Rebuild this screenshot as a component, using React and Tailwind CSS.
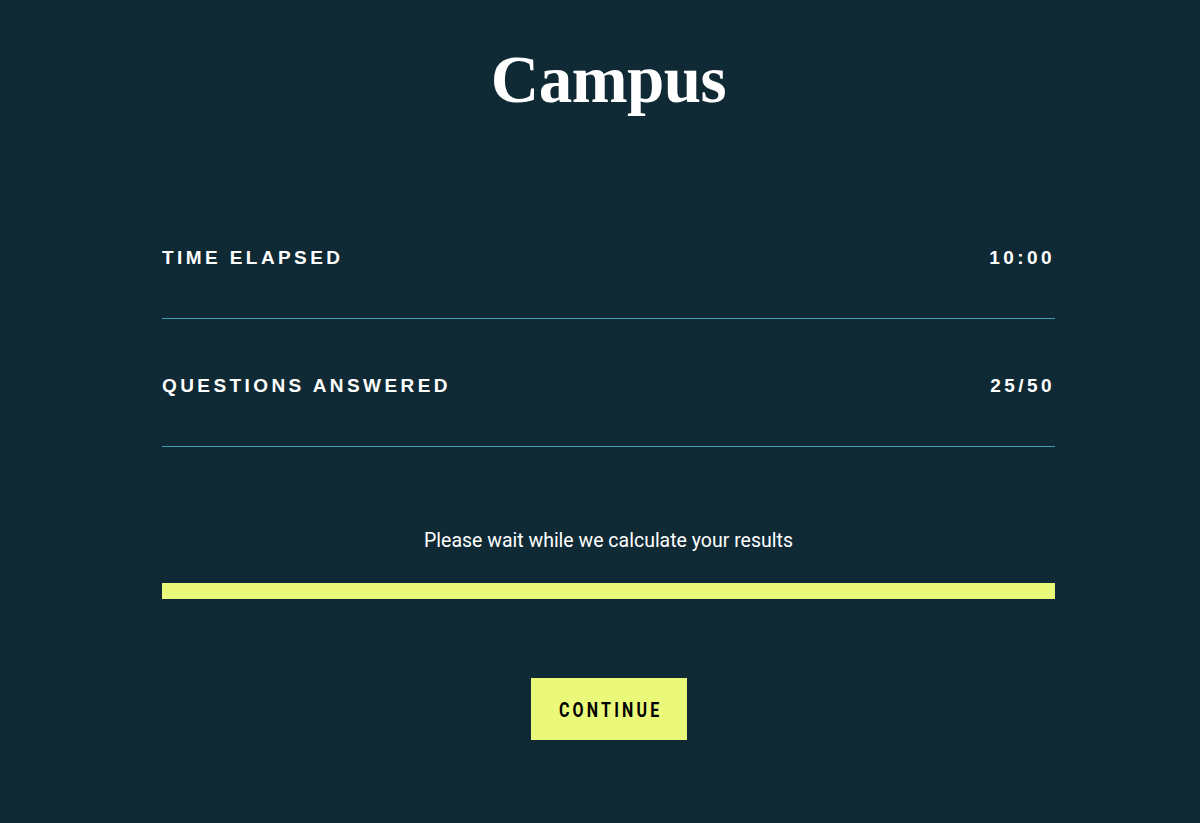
export default function App() {
    const rows = [
        { label: "TIME ELAPSED", value: "10:00" },
        { label: "QUESTIONS ANSWERED", value: "25/50" },
    ];

    return (
        <div className="min-h-[823px] w-full bg-[#0f2a35] text-white flex flex-col items-center pl-[17px] font-['Liberation_Sans',sans-serif]">
            {/* Title */}
            <h1 className="mt-[39px] text-[67px] leading-[80px] font-bold font-['Liberation_Serif',serif] tracking-[-0.5px]">
                Campus
            </h1>

            {/* Stats */}
            <div className="w-[893px] mt-[72px]">
                {rows.map((r) => (
                    <div key={r.label} className="flex flex-col h-[128px]">
                        <div className="flex justify-between items-start pt-[53px] flex-1">
                            <span className="text-[19px] font-bold tracking-[0.18em]">{r.label}</span>
                            <span className="text-[19px] font-bold tracking-[0.18em]">{r.value}</span>
                        </div>
                        <div className="h-px bg-[#3f9fba]" />
                    </div>
                ))}
            </div>

            {/* Progress */}
            <p className="mt-[80px] text-[19.5px] leading-[28px] font-['Roboto',sans-serif]">
                Please wait while we calculate your results
            </p>
            <div className="w-[893px] h-[16px] bg-[#eaf97a] mt-[28px]" />

            {/* Button */}
            <button className="mt-[79px] w-[156px] h-[62px] bg-[#eaf97a] text-black flex items-center justify-center pt-[2px]">
                <span className="inline-block scale-x-[0.8] text-[20px] font-bold tracking-[0.2em] mr-[-0.2em] font-['Roboto',sans-serif]">
                    CONTINUE
                </span>
            </button>
        </div>
    );
}
